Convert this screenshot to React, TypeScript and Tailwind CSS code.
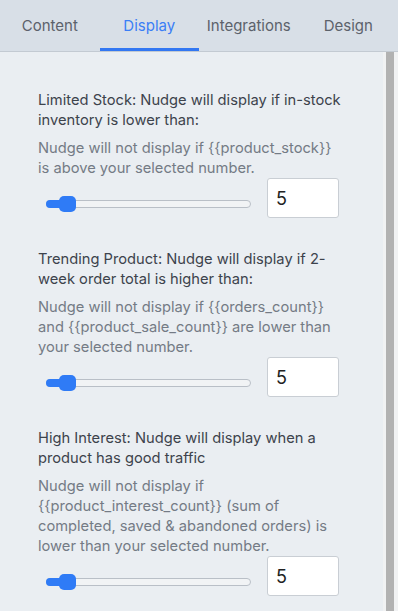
import React from 'react';

const tabs = ['Content', 'Display', 'Integrations', 'Design'];

const rules = [
  {
    title: 'Limited Stock: Nudge will display if in-stock inventory is lower than:',
    note: 'Nudge will not display if {{product_stock}} is above your selected number.',
    value: 5,
  },
  {
    title: 'Trending Product: Nudge will display if 2-week order total is higher than:',
    note: 'Nudge will not display if {{orders_count}} and {{product_sale_count}} are lower than your selected number.',
    value: 5,
  },
  {
    title: 'High Interest: Nudge will display when a product has good traffic',
    note: 'Nudge will not display if {{product_interest_count}} (sum of completed, saved & abandoned orders) is lower than your selected number.',
    value: 5,
  },
];

/* Static range slider drawn with divs */
function Slider() {
  return (
    <div className="relative flex-1 h-4 ml-2 mt-[18px]">
      <div className="absolute left-0 right-0 top-1 h-2 rounded-full border border-[#b9bfc7] bg-[#f1f3f5]" />
      <div className="absolute left-0 w-[16px] top-1 h-2 rounded-l-full bg-[#2f7bf6]" />
      <div className="absolute left-[13px] top-0 w-[17px] h-4 rounded-[5px] bg-[#2f7bf6]" />
    </div>
  );
}

export default function App() {
  return (
    <div
      className="w-[398px] h-[611px] overflow-hidden flex flex-col bg-[#eaeef2]"
      style={{ fontFamily: 'Inter, "Noto Sans", sans-serif' }}
    >
      {/* Tabs */}
      <div className="grid grid-cols-4 h-[52px] bg-[#d8dfe7] border-b border-[#c3cad2] shrink-0">
        {tabs.map(t => {
          const active = t === 'Display';
          return (
            <div
              key={t}
              className={`relative flex items-center justify-center pt-[1px] text-[15px] ${
                active ? 'text-[#3b7ef6]' : 'text-[#5c626b]'
              }`}
            >
              {t}
              {active && <div className="absolute left-0 right-0 bottom-0 h-[3px] bg-[#3277f2]" />}
            </div>
          );
        })}
      </div>

      <div className="flex flex-1 min-h-0">
        {/* Content */}
        <div className="flex-1 pl-[38px] pr-[40px] pt-[38px] flex flex-col gap-[31px]">
          {rules.map((r, i) => (
            <section key={i}>
              <p className="text-[14.7px] leading-5 text-[#3d434c]">{r.title}</p>
              <p className="mt-2 text-[14.7px] leading-5 text-[#747b85]">{r.note}</p>
              <div className="flex items-start gap-4 pr-[4px]">
                <Slider />
                <div className="w-[72px] h-10 shrink-0 bg-white border border-[#c9ced4] rounded-[3px] flex items-center pl-2 text-[18px] text-[#222]">
                  {r.value}
                </div>
              </div>
            </section>
          ))}
        </div>

        {/* Scrollbar */}
        <div className="w-[15px] shrink-0 bg-[#f1f2f3] pl-[3px] pr-[4px]">
          <div className="h-full bg-[#b2b2b2]" />
        </div>
      </div>
    </div>
  );
}
